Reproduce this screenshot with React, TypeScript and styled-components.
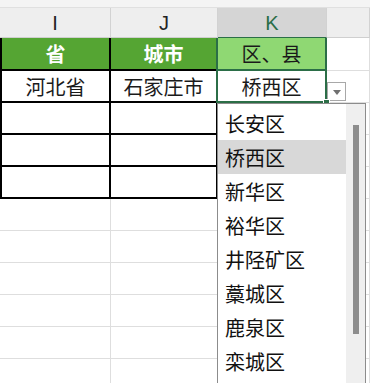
import React from 'react';
import styled, { createGlobalStyle, css } from 'styled-components';

const Global = createGlobalStyle`
  *, *::before, *::after { box-sizing: border-box; }
  html, body { margin: 0; padding: 0; background: #fff; }
  body { width: 370px; height: 383px; overflow: hidden; }
`;

const COLS = '111px 107px 109px 1fr';
const SEL = '#2b6e47';

const Page = styled.div`
  position: relative;
  width: 370px;
  height: 383px;
  overflow: hidden;
  background: #fff;
  font-family: "Noto Sans CJK SC", "Liberation Sans", sans-serif;
`;

const TopStrip = styled.div`
  height: 8px;
  background: #f4f4f4;
  border-bottom: 1px solid #e0e0e0;
`;

const HeaderRow = styled.div`
  display: grid;
  grid-template-columns: ${COLS};
  height: 30px;
`;

const ColHeader = styled.div<{ $active?: boolean }>`
  display: flex;
  align-items: center;
  justify-content: center;
  background: ${(p) => (p.$active ? '#d5d5d5' : '#eeeeee')};
  border-right: 1px solid #d2d2d2;
  border-bottom: 1px solid ${(p) => (p.$active ? SEL : '#cfcfcf')};
  color: ${(p) => (p.$active ? SEL : '#222')};
  font-family: "Liberation Sans", Arial, sans-serif;
  font-size: 20px;
  padding-top: 1px;
`;

const Row = styled.div<{ $h: number }>`
  display: grid;
  grid-template-columns: ${COLS};
  height: ${(p) => p.$h}px;
`;

type Kind = 'green' | 'light' | 'plain' | 'grid';

const Cell = styled.div<{ $kind: Kind; $left?: boolean; $sel?: boolean }>`
  position: relative;
  display: flex;
  align-items: center;
  justify-content: center;
  font-size: 20px;
  color: #1a1a1a;
  background: ${(p) =>
    p.$kind === 'green' ? '#55a533' : p.$kind === 'light' ? '#8fd873' : '#fff'};
  ${(p) =>
    p.$kind === 'grid'
      ? css`
          border-right: 1px solid #dedede;
          border-bottom: 1px solid #dedede;
        `
      : css`
          border-right: 2px solid #000;
          border-bottom: 2px solid #000;
        `}
  ${(p) =>
    p.$left &&
    css`
      border-left: 2px solid #000;
    `}
  ${(p) =>
    p.$kind === 'green' &&
    css`
      color: #fff;
      font-weight: 700;
    `}
  ${(p) =>
    p.$sel &&
    css`
      border-right-color: ${SEL};
      border-bottom-color: ${SEL};
      box-shadow: -2px 0 0 ${SEL};
    `}
`;

const DropButton = styled.div`
  position: absolute;
  z-index: 2;
  left: 109px;
  top: 11px;
  width: 19px;
  height: 19px;
  background: #fff;
  border: 1px solid #a8a8a8;
  display: flex;
  align-items: center;
  justify-content: center;
`;

const Caret = styled.span`
  width: 0;
  height: 0;
  border-left: 4px solid transparent;
  border-right: 4px solid transparent;
  border-top: 5px solid #707070;
  margin-top: 1px;
`;

const FillHandle = styled.div`
  position: absolute;
  z-index: 3;
  right: -4px;
  bottom: -4px;
  width: 5px;
  height: 5px;
  background: ${SEL};
  outline: 1px solid #fff;
`;

const DropList = styled.div`
  position: absolute;
  z-index: 5;
  left: 217px;
  top: 103px;
  width: 149px;
  height: 300px;
  display: flex;
  background: #fff;
  border: 1px solid #8c8c8c;
`;

const Items = styled.div`
  width: 128px;
  padding-top: 2px;
  display: flex;
  flex-direction: column;
`;

const Item = styled.div<{ $active?: boolean }>`
  height: 34px;
  flex: none;
  display: flex;
  align-items: center;
  padding-left: 7px;
  font-size: 20px;
  color: #111;
  background: ${(p) => (p.$active ? '#d8d8d8' : 'transparent')};
`;

const Track = styled.div`
  flex: 1;
  background: #efefef;
  display: flex;
  justify-content: center;
  padding-left: 1px;
`;

const Thumb = styled.div`
  margin-top: 21px;
  width: 6px;
  height: 209px;
  background: #8d8d8d;
`;

const rows: { h: number; cells: { kind: Kind; text?: string; sel?: boolean; drop?: boolean }[] }[] = [
  {
    h: 33,
    cells: [
      { kind: 'green', text: '省' },
      { kind: 'green', text: '城市' },
      { kind: 'light', text: '区、县', sel: true },
      { kind: 'grid' },
    ],
  },
  {
    h: 32,
    cells: [
      { kind: 'plain', text: '河北省' },
      { kind: 'plain', text: '石家庄市' },
      { kind: 'plain', text: '桥西区', sel: true, drop: true },
      { kind: 'grid' },
    ],
  },
  ...[0, 1, 2].map(() => ({
    h: 32,
    cells: [{ kind: 'plain' as Kind }, { kind: 'plain' as Kind }, { kind: 'plain' as Kind }, { kind: 'grid' as Kind }],
  })),
  ...[0, 1, 2, 3, 4, 5].map(() => ({
    h: 32,
    cells: [{ kind: 'grid' as Kind }, { kind: 'grid' as Kind }, { kind: 'grid' as Kind }, { kind: 'grid' as Kind }],
  })),
];

const districts = ['长安区', '桥西区', '新华区', '裕华区', '井陉矿区', '藁城区', '鹿泉区', '栾城区'];

export default function App() {
  return (
    <Page>
      <Global />
      <TopStrip />
      <HeaderRow>
        <ColHeader>I</ColHeader>
        <ColHeader>J</ColHeader>
        <ColHeader $active>K</ColHeader>
        <ColHeader />
      </HeaderRow>
      {rows.map((r, ri) => (
        <Row key={ri} $h={r.h}>
          {r.cells.map((c, ci) => (
            <Cell key={ci} $kind={c.kind} $left={ci === 0 && c.kind !== 'grid'} $sel={c.sel}>
              {c.text}
              {c.drop && (
                <>
                  <DropButton>
                    <Caret />
                  </DropButton>
                  <FillHandle />
                </>
              )}
            </Cell>
          ))}
        </Row>
      ))}
      <DropList>
        <Items>
          {districts.map((d, i) => (
            <Item key={d} $active={i === 1}>
              {d}
            </Item>
          ))}
        </Items>
        <Track>
          <Thumb />
        </Track>
      </DropList>
    </Page>
  );
}
